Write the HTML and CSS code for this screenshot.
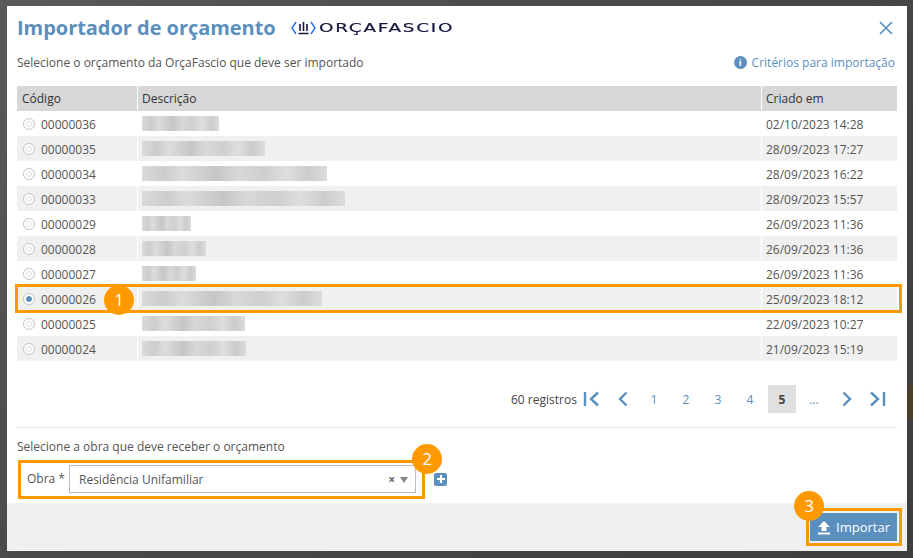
FILE: index.html
```html
<!DOCTYPE html>
<html lang="pt-BR">
<head>
<meta charset="utf-8">
<title>Importador de orçamento</title>
<link rel="stylesheet" href="styles.css">
</head>
<body>
<div class="backdrop-strip"></div>
<div class="modal">
  <header class="head">
    <h1 class="title">Importador de orçamento</h1>
    <span class="logo">
      <svg class="logo-mark" width="25" height="16" viewBox="0 0 25 16" aria-hidden="true">
        <path d="M5 2 L1 8 L5 14 M20 2 L24 8 L20 14" fill="none" stroke="#1f6fe0" stroke-width="1.4"/>
        <path d="M9 4v7M12.500 2v9M16 4v7M7.500 13.500h10" fill="none" stroke="#14163f" stroke-width="1.600"/>
      </svg>
      <span class="logo-text">ORÇAFASCIO</span>
    </span>
    <svg class="close" width="14" height="14" viewBox="0 0 14 14" aria-hidden="true"><path d="M1 1 L13 13 M13 1 L1 13" stroke="#5b8fbd" stroke-width="1.700" fill="none"/></svg>
  </header>
  <div class="intro">
    <span>Selecione o orçamento da OrçaFascio que deve ser importado</span>
    <a class="criteria"><span class="info">i</span>Critérios para importação</a>
  </div>
  <div class="table">
    <div class="row header"><div class="c1">Código</div><div class="c2">Descrição</div><div class="c3">Criado em</div></div>
    <div class="row"><div class="c1"><i class="radio"></i>00000036</div><div class="c2"><b class="blur" style="width:77px"></b></div><div class="c3">02/10/2023 14:28</div></div>
    <div class="row"><div class="c1"><i class="radio"></i>00000035</div><div class="c2"><b class="blur" style="width:123px"></b></div><div class="c3">28/09/2023 17:27</div></div>
    <div class="row"><div class="c1"><i class="radio"></i>00000034</div><div class="c2"><b class="blur" style="width:185px"></b></div><div class="c3">28/09/2023 16:22</div></div>
    <div class="row"><div class="c1"><i class="radio"></i>00000033</div><div class="c2"><b class="blur" style="width:203px"></b></div><div class="c3">28/09/2023 15:57</div></div>
    <div class="row"><div class="c1"><i class="radio"></i>00000029</div><div class="c2"><b class="blur" style="width:49px"></b></div><div class="c3">26/09/2023 11:36</div></div>
    <div class="row"><div class="c1"><i class="radio"></i>00000028</div><div class="c2"><b class="blur" style="width:64px"></b></div><div class="c3">26/09/2023 11:36</div></div>
    <div class="row"><div class="c1"><i class="radio"></i>00000027</div><div class="c2"><b class="blur" style="width:54px"></b></div><div class="c3">26/09/2023 11:36</div></div>
    <div class="row"><div class="c1"><i class="radio on"></i>00000026</div><div class="c2"><b class="blur" style="width:180px"></b></div><div class="c3">25/09/2023 18:12</div></div>
    <div class="row"><div class="c1"><i class="radio"></i>00000025</div><div class="c2"><b class="blur" style="width:103px"></b></div><div class="c3">22/09/2023 10:27</div></div>
    <div class="row"><div class="c1"><i class="radio"></i>00000024</div><div class="c2"><b class="blur" style="width:104px"></b></div><div class="c3">21/09/2023 15:19</div></div>
  </div>
  <nav class="pager">
    <span class="count">60 registros</span>
    <svg class="pg-icon first" width="17" height="16" viewBox="0 0 17 16" aria-hidden="true"><path d="M2 1v14M15 1.500 L8 8 L15 14.500" fill="none" stroke="#5b8fbd" stroke-width="2.400"/></svg>
    <svg class="pg-icon prev" width="10" height="16" viewBox="0 0 10 16" aria-hidden="true"><path d="M8.500 1.500 L2 8 L8.500 14.500" fill="none" stroke="#5b8fbd" stroke-width="2.400"/></svg>
    <a class="pg">1</a><a class="pg">2</a><a class="pg">3</a><a class="pg">4</a><a class="pg active">5</a><a class="pg">...</a>
    <svg class="pg-icon next" width="10" height="16" viewBox="0 0 10 16" aria-hidden="true"><path d="M1.500 1.500 L8 8 L1.500 14.500" fill="none" stroke="#5b8fbd" stroke-width="2.400"/></svg>
    <svg class="pg-icon last" width="17" height="16" viewBox="0 0 17 16" aria-hidden="true"><path d="M15 1v14M2 1.500 L9 8 L2 14.500" fill="none" stroke="#5b8fbd" stroke-width="2.400"/></svg>
  </nav>
  <section class="work">
    <div class="work-label">Selecione a obra que deve receber o orçamento</div>
    <div class="work-row">
      <label class="obra">Obra *</label>
      <div class="select">
        <span class="select-value">Residência Unifamiliar</span>
        <span class="clear">×</span>
        <span class="caret"></span>
      </div>
      <span class="plus">
        <svg width="12" height="12" viewBox="0 0 12 12" aria-hidden="true"><path d="M6 2v8M2 6h8" stroke="#fff" stroke-width="2.200"/></svg>
      </span>
    </div>
  </section>
  <footer class="foot">
    <button class="import">
      <svg width="14" height="15" viewBox="0 0 14 15" aria-hidden="true"><path d="M7 1 L13 7 H9.500 V11 H4.500 V7 H1 Z M1 12.500 H13 V14.500 H1 Z" fill="#fff"/></svg>
      Importar
    </button>
  </footer>
</div>
<div class="mark mark-row"></div>
<div class="mark mark-obra"></div>
<div class="mark mark-btn"></div>
<div class="badge badge-1">1</div>
<div class="badge badge-2">2</div>
<div class="badge badge-3">3</div>
</body>
</html>
```
FILE: styles.css
```css
* { box-sizing: border-box; }
html, body { margin: 0; height: 100%; }
body {
  position: relative;
  width: 913px;
  height: 558px;
  overflow: hidden;
  background: linear-gradient(135deg, #5a5a5a 0%, #4a4a4a 40%, #3d3d3d 100%);
  font-family: "Open Sans", "Noto Sans", sans-serif;
  font-size: 12px;
  color: #555;
  padding: 6px 6px 7px 7px;
}
.backdrop-strip {
  position: absolute;
  left: 907px;
  top: 385px;
  width: 6px;
  height: 35px;
  background: #4b3f2d;
}
.modal {
  position: relative;
  width: 900px;
  height: 545px;
  background: #fff;
  display: flex;
  flex-direction: column;
}
.head {
  display: flex;
  align-items: center;
  height: 43px;
  padding: 0 14px 0 10px;
}
.title {
  margin: 0;
  font-size: 20px;
  font-weight: 700;
  letter-spacing: -0.04px;
  color: #5b8fbd;
  line-height: 43px;
}
.logo { display: flex; align-items: center; margin-left: 15px; gap: 3px; }
.logo-text {
  font-family: "DejaVu Sans", sans-serif;
  font-size: 12.500px;
  letter-spacing: 1.200px;
  color: #14163f;
  -webkit-text-stroke: 0.2px #14163f;
  display: inline-block;
  width: 133px;
  transform: scaleX(1.470);
  transform-origin: left center;
}
.close { margin-left: auto; }
.intro {
  display: flex;
  justify-content: space-between;
  align-items: center;
  height: 24px;
  padding: 0 12px 0 10px;
  margin-top: 1px;
  font-size: 12px;
}
.criteria { display: flex; align-items: center; gap: 5px; color: #5b8fbd; font-size: 12px; }
.info {
  width: 13px;
  height: 13px;
  border-radius: 50%;
  background: #5b8fbd;
  color: #fff;
  font-size: 9px;
  font-weight: 700;
  line-height: 13px;
  text-align: center;
}
.table { margin: 12px 10px 0; display: flex; flex-direction: column; }
.row {
  display: grid;
  grid-template-columns: 120px 1fr 135px;
  column-gap: 1px;
  height: 25px;
  align-items: stretch;
}
.row > div { display: flex; align-items: center; padding: 1px 0 0 4px; white-space: nowrap; }
.row:nth-child(odd):not(.header) > div { background: #f0f0f0; }
.row.header > div { background: #d7d7d7; color: #333; padding-top: 0; }
.row .c1 { padding-left: 5px; }
.radio {
  width: 12px;
  height: 12px;
  border: 1px solid #c4c4c4;
  border-radius: 50%;
  background: #fff;
  margin: 0 6px 0 1px;
  position: relative;
  flex: none;
}
.radio::after {
  content: "";
  position: absolute;
  inset: 2px;
  border-radius: 50%;
  border: 1px solid #e0e0e0;
}
.radio.on::after { background: #5b8fbd; border-color: #5b8fbd; }
.blur {
  display: block;
  height: 15px;
  margin-top: -1px;
  background: linear-gradient(90deg, #dadada, #cdcdcd 12%, #dcdcdc 22%, #c6c6c6 40%, #d8d8d8 52%, #cfcfcf 66%, #dedede 78%, #cccccc 90%, #dcdcdc);
  filter: blur(0.6px);
}
.pager {
  display: flex;
  align-items: center;
  height: 30px;
  margin: 23px 0 0;
  padding-left: 504px;
}
.count { color: #444; margin-right: 6px; }
.pg-icon { flex: none; }
.prev { margin-left: 18px; }
.pg { width: 28px; height: 28px; margin-left: 4px; display: flex; align-items: center; justify-content: center; color: #5b8fbd; }
.prev + .pg { margin-left: 12px; }
.pg.active { background: #e0e0e0; color: #444; font-weight: 700; }
.next { margin-left: 14px; }
.last { margin-left: 17px; }
.work {
  margin: 13px 10px 0;
  border-top: 1px solid #e6e6e6;
  padding-top: 11px;
  height: 76px;
}
.work-label { font-size: 12px; line-height: 16px; }
.work-row { display: flex; align-items: center; margin-top: 10px; height: 28px; padding-left: 10px; }
.obra { width: 42px; flex: none; line-height: 24px; }
.select {
  width: 347px;
  height: 28px;
  border: 1px solid #bbb;
  display: flex;
  align-items: center;
  padding: 1px 7px 0 9px;
}
.select-value { flex: 1; }
.clear { font-size: 12px; font-weight: 700; color: #666; margin-right: 5px; }
.caret { width: 0; height: 0; border: 4.500px solid transparent; border-top: 6px solid #888; border-bottom: 0; }
.plus {
  width: 13px;
  height: 13px;
  margin-left: 18px;
  background: #5b8fbd;
  border-radius: 2px;
  display: flex;
  align-items: center;
  justify-content: center;
}
.foot {
  flex: 1;
  background: #f0f0f0;
  display: flex;
  align-items: center;
  justify-content: flex-end;
  padding: 0 10px 0 0;
}
.import {
  width: 87px;
  height: 28px;
  border: 0;
  background: #5b8fbd;
  color: #fff;
  font: 13px "Open Sans", sans-serif;
  display: flex;
  align-items: center;
  justify-content: center;
  gap: 5px;
  padding: 0;
}
.mark { position: absolute; border: 3px solid #ff9900; }
.mark-row { left: 15px; top: 284px; width: 887px; height: 29px; }
.mark-obra { left: 18px; top: 460px; width: 407px; height: 39px; }
.mark-btn { left: 806px; top: 508px; width: 96px; height: 38px; }
.badge {
  position: absolute;
  width: 30px;
  height: 30px;
  border-radius: 50%;
  background: #ff9900;
  color: #fff;
  font-size: 17px;
  line-height: 30px;
  text-align: center;
}
.badge-1 { left: 104px; top: 285px; }
.badge-2 { left: 412px; top: 444px; }
.badge-3 { left: 794px; top: 491px; }
```
